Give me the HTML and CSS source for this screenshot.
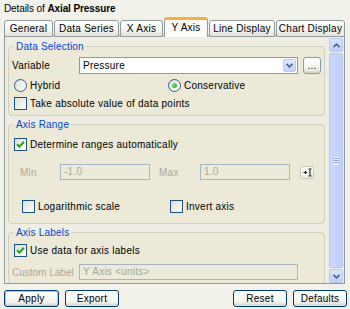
FILE: index.html
```html
<!DOCTYPE html>
<html lang="en">
<head>
  <meta charset="UTF-8" />
  <title>Details of Axial Pressure</title>
  <link rel="stylesheet" href="styles.css">
</head>
<body>
  <div class="window">
    <div class="title">Details of <b>Axial Pressure</b></div>

    <div class="tabs">
      <div class="tab">General</div>
      <div class="tab">Data Series</div>
      <div class="tab">X Axis</div>
      <div class="tab active">Y Axis</div>
      <div class="tab">Line Display</div>
      <div class="tab">Chart Display</div>
    </div>

    <div class="panel">
      <div class="content">

        <fieldset class="group">
          <legend>Data Selection</legend>
          <div class="row field-row">
            <span class="row-label">Variable</span>
            <div class="combo">
              <span class="combo-text">Pressure</span>
              <span class="combo-drop">
                <svg width="7" height="5" viewBox="0 0 7 5"><path d="M0.5 0.8 L3.5 3.8 L6.5 0.8" fill="none" stroke="#4d6185" stroke-width="1.6"/></svg>
              </span>
            </div>
            <div class="btn mini">...</div>
          </div>
          <div class="row two-col radios">
            <div class="opt"><span class="radio"></span>Hybrid</div>
            <div class="opt"><span class="radio on"></span>Conservative</div>
          </div>
          <div class="row checks">
            <div class="opt"><span class="check"></span>Take absolute value of data points</div>
          </div>
        </fieldset>

        <fieldset class="group">
          <legend>Axis Range</legend>
          <div class="row auto-row">
            <div class="opt"><span class="check on"><svg width="9" height="9" viewBox="0 0 9 9"><path d="M1 4.2 L3.4 6.6 L8 1.8" fill="none" stroke="#21a121" stroke-width="2"/></svg></span>Determine ranges automatically</div>
          </div>
          <div class="row range-row">
            <span class="range-label">Min</span>
            <div class="text-field disabled">-1.0</div>
            <span class="range-label max">Max</span>
            <div class="text-field disabled">1.0</div>
            <div class="btn icon-btn">
              <svg width="9" height="9" viewBox="0 0 9 9"><path d="M0.5 4.5 H4 M2.5 3 V6" stroke="#222" stroke-width="1.2" fill="none"/><path d="M5.5 1 H8.5 M7 1 V8 M5.5 8 H8.5" stroke="#222" stroke-width="1.1" fill="none"/></svg>
            </div>
          </div>
          <div class="row two-col scale-row">
            <div class="opt"><span class="check"></span>Logarithmic scale</div>
            <div class="opt"><span class="check"></span>Invert axis</div>
          </div>
        </fieldset>

        <fieldset class="group">
          <legend>Axis Labels</legend>
          <div class="row checks-first">
            <div class="opt"><span class="check on"><svg width="9" height="9" viewBox="0 0 9 9"><path d="M1 4.2 L3.4 6.6 L8 1.8" fill="none" stroke="#21a121" stroke-width="2"/></svg></span>Use data for axis labels</div>
          </div>
          <div class="row field-row custom-row">
            <span class="row-label dim">Custom Label</span>
            <div class="text-field disabled wide">Y Axis &lt;units&gt;</div>
          </div>
          <div class="row spacer"></div>
        </fieldset>

      </div>

      <div class="scrollbar">
        <div class="sb-btn">
          <svg width="7" height="5" viewBox="0 0 7 5"><path d="M0.5 4.2 L3.5 1.2 L6.5 4.2" fill="none" stroke="#4d6185" stroke-width="1.6"/></svg>
        </div>
        <div class="sb-thumb"><span class="grip"></span></div>
        <div class="sb-btn">
          <svg width="7" height="5" viewBox="0 0 7 5"><path d="M0.5 0.8 L3.5 3.8 L6.5 0.8" fill="none" stroke="#4d6185" stroke-width="1.6"/></svg>
        </div>
      </div>
    </div>

    <div class="buttons">
      <div class="btn-group">
        <div class="btn wide-btn default">Apply</div>
        <div class="btn wide-btn">Export</div>
      </div>
      <div class="btn-group">
        <div class="btn wide-btn">Reset</div>
        <div class="btn wide-btn">Defaults</div>
      </div>
    </div>
  </div>
</body>
</html>
```

FILE: styles.css
```css
body {
  margin: 0;
  background: #f3f2ea;
  font-family: 'Liberation Sans', Arial, sans-serif;
  font-size: 10px;
  letter-spacing: 0.25px;
  color: #000;
}
.window {
  width: 350px;
  height: 309px;
  overflow: hidden;
}
.title {
  height: 17px;
  line-height: 17px;
  padding-left: 4px;
  letter-spacing: -0.1px;
}

/* tabs */
.tabs {
  display: grid;
  grid-template-columns: 49px 65px 43px 44px 66px 69px;
  column-gap: 1px;
  align-items: end;
  margin-left: 4px;
  height: 19px;
  position: relative;
  z-index: 1;
  margin-bottom: -1px;
}
.tab {
  height: 17px;
  box-sizing: border-box;
  border: 1px solid #919b9c;
  border-radius: 3px 3px 0 0;
  background: linear-gradient(#ffffff, #f3f3ef 60%, #e3e2da);
  text-align: center;
  line-height: 16px;
  white-space: nowrap;
}
.tab.active {
  height: 20px;
  border-top: 3px solid #f6b13a;
  border-bottom: none;
  background: #fcfcfa;
  line-height: 16px;
}

/* panel */
.panel {
  display: flex;
  width: 341px;
  height: 249px;
  box-sizing: border-box;
  margin-left: 4px;
  border: 1px solid #919b9c;
  background: #f0eee4;
}
.content {
  flex: 1;
  overflow: hidden;
  padding: 4px 4px 0 3px;
}
.group {
  margin: 0 0 2px 0;
  padding: 0 3px 5px 3px;
  border: 1px solid #d0d0bf;
  border-radius: 4px;
  background: #ece9d8;
  min-width: 0;
}
.group + .group {
  margin-top: 2px;
}
.group legend {
  color: #0046d5;
  padding: 0 2px;
  margin-left: 2px;
  line-height: 13px;
  letter-spacing: 0.2px;
}
.row {
  display: flex;
  align-items: center;
  white-space: nowrap;
}
.two-col {
  display: grid;
  grid-template-columns: 154px 1fr;
}
.opt {
  display: flex;
  align-items: center;
  gap: 3px;
  margin-left: 2px;
}

/* Data Selection rows */
.field-row {
  margin-top: 4px;
  height: 17px;
}
.row-label {
  width: 67px;
}
.row-label.dim {
  color: #aca899;
  letter-spacing: 0;
}
.combo {
  width: 219px;
  height: 17px;
  box-sizing: border-box;
  border: 1px solid #7f9db9;
  background: #fff;
  display: flex;
  align-items: center;
  padding: 1px;
}
.combo-text {
  flex: 1;
  padding-left: 2px;
}
.combo-drop {
  width: 13px;
  height: 13px;
  box-sizing: border-box;
  border: 1px solid #b9cbf3;
  border-radius: 2px;
  background: linear-gradient(#e1eafe, #c1d3fb);
  display: flex;
  align-items: center;
  justify-content: center;
}
.radios {
  margin-top: 5px;
  height: 13px;
}
.checks {
  margin-top: 5px;
  height: 13px;
}

/* Axis Range rows */
.auto-row {
  margin-top: 7px;
  height: 13px;
}
.range-row {
  margin-top: 13px;
  height: 16px;
  padding-left: 8px;
}
.range-label {
  width: 40px;
  color: #aca899;
}
.range-label.max {
  width: 41px;
  margin-left: 9px;
}
.text-field {
  width: 90px;
  height: 16px;
  box-sizing: border-box;
  border: 1px solid #7f9db9;
  background: #fff;
  padding-left: 3px;
  line-height: 14px;
}
.text-field.disabled {
  border-color: #a5b6c6;
  background: #ebeadb;
  color: #aca899;
}
.text-field.wide {
  width: 219px;
}
.scale-row {
  margin-top: 20px;
  height: 13px;
  padding-left: 8px;
  grid-template-columns: 148px 1fr;
}
.group:nth-of-type(2) {
  padding-bottom: 10px;
}

/* Axis Labels rows */
.checks-first {
  margin-top: 5px;
  height: 13px;
}
.custom-row {
  margin-top: 7px;
  height: 16px;
}
.spacer {
  height: 20px;
}

/* checkbox / radio */
.check,
.radio {
  width: 13px;
  height: 13px;
  box-sizing: border-box;
  border: 1px solid #1c5180;
  background: linear-gradient(135deg, #dcdcd7, #ffffff);
  display: flex;
  align-items: center;
  justify-content: center;
  flex: none;
}
.radio {
  border-radius: 50%;
  border-color: #2f5e8e;
}
.radio.on::after {
  content: "";
  width: 5px;
  height: 5px;
  border-radius: 50%;
  background: radial-gradient(circle at 35% 35%, #6fe36f, #21a121);
}

/* buttons */
.btn {
  box-sizing: border-box;
  border: 1px solid #003c74;
  border-radius: 3px;
  background: linear-gradient(#ffffff, #f4f4f0 70%, #d8d4c8);
  display: flex;
  align-items: center;
  justify-content: center;
}
.btn.mini {
  width: 18px;
  height: 17px;
  margin-left: 5px;
  line-height: 10px;
  border-color: #7f9db9;
}
.btn.icon-btn {
  width: 14px;
  height: 13px;
  margin-left: 10px;
  border-color: #c9c6b8;
  background: linear-gradient(#fdfdfb, #ecebe4);
}
.buttons {
  display: flex;
  justify-content: space-between;
  margin-top: 6px;
  padding: 0 3px 0 4px;
}
.btn-group {
  display: flex;
  gap: 6px;
}
.wide-btn {
  width: 54px;
  height: 17px;
}
.btn.default {
  width: 55px;
  box-shadow: inset 0 0 0 1px #a9c4f0;
}

/* scrollbar */
.scrollbar {
  width: 14px;
  margin: 2px 1px 0 0;
  display: flex;
  flex-direction: column;
  gap: 1px;
  background: #f4f3ee;
}
.sb-btn {
  height: 14px;
  box-sizing: border-box;
  border: 1px solid #b4c8f6;
  border-radius: 2px;
  background: linear-gradient(#dbe6fe, #bccffa);
  display: flex;
  align-items: center;
  justify-content: center;
}
.sb-thumb {
  flex: 1;
  box-sizing: border-box;
  border: 1px solid #b4c8f6;
  border-radius: 2px;
  background: linear-gradient(90deg, #c9d8fc, #bfd0fb);
  display: flex;
  align-items: center;
  justify-content: center;
}
.grip {
  width: 5px;
  height: 6px;
  border-top: 1px solid #eef3fe;
  border-bottom: 1px solid #eef3fe;
  background: repeating-linear-gradient(#8ca7e4 0 1px, #eef3fe 1px 2px);
}
```
